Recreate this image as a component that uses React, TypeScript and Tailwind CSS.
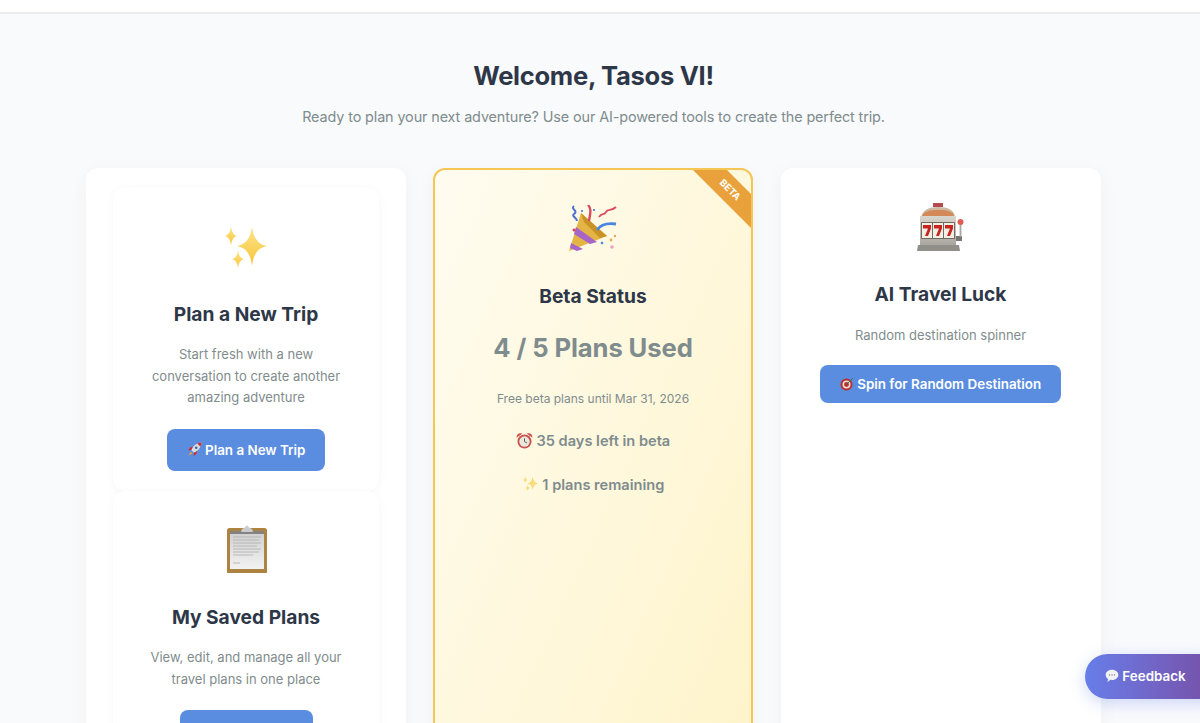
const Sparkles = () => (
  <svg width="48" height="48" viewBox="0 0 48 48">
    <defs>
      <linearGradient id="spark" x1="0" y1="0" x2="0" y2="1">
        <stop offset="0" stopColor="#fde58a" />
        <stop offset="1" stopColor="#f7c53d" />
      </linearGradient>
    </defs>
    <path d="M30 1.500 Q32 19 45 21 Q32 23 30 40.500 Q28 23 15 21 Q28 19 30 1.500Z" fill="url(#spark)" />
    <path d="M9 1.500 Q10 10 15 11 Q10 12 9 20.500 Q8 12 3 11 Q8 10 9 1.500Z" fill="url(#spark)" />
    <path d="M16 25.500 Q17 33 22 34 Q17 35 16 42.500 Q15 35 10 34 Q15 33 16 25.500Z" fill="url(#spark)" />
  </svg>
)

const Clipboard = () => (
  <svg width="48" height="48" viewBox="0 0 48 48">
    <defs>
      <linearGradient id="paper" x1="0" y1="0" x2="0" y2="1">
        <stop offset="0" stopColor="#cfcfcf" />
        <stop offset="1" stopColor="#f2f2f2" />
      </linearGradient>
    </defs>
    <rect x="5" y="3" width="40" height="46" rx="2.500" fill="#ad8342" />
    <rect x="8" y="6" width="34" height="38" fill="url(#paper)" />
    <path d="M8 6h34v3H8z" fill="#85837f" />
    <path d="M20 4 L23 2.500 C24 0 26 0 27 2.500 L30 4 L31 7 H19Z" fill="#c8ccd0" />
    <path d="M11 12h28M11 15h26M11 18h28M11 21h24M11 24h28M11 27h26M11 30h20M11 38h7" stroke="#adadad" strokeWidth="0.8" />
  </svg>
)

const Popper = () => (
  <svg width="48" height="48" viewBox="0 0 48 48">
    <path d="M0 46 L12 8 L38 31 Z" fill="#e4b545" />
    <path d="M12 8 L38 31 L31 33 L15 17Z" fill="#c89428" />
    <path d="M7 22 L28 37 L21 39 L5 29Z" fill="#a765c8" />
    <path d="M2 38 L14 44 L8 46 L1 43Z" fill="#a765c8" />
    <path d="M5 1 C1 4 10 6 5 9 C2 11 8 13 8 16" stroke="#4a6fd0" strokeWidth="2" fill="none" />
    <path d="M19 0 C23 4 21 9 20 16" stroke="#dc4a5e" strokeWidth="2.400" fill="none" />
    <path d="M30 12 C33 7 35 11 37 7 C39 3 42 7 47 2" stroke="#dc4a5e" strokeWidth="1.800" fill="none" />
    <path d="M28 25 C32 19 40 18 47 19" stroke="#4a85e0" strokeWidth="2.800" fill="none" />
    <circle cx="5" cy="25" r="1.500" fill="#d8434f" />
    <circle cx="25" cy="5" r="1.100" fill="#4a6fd0" />
    <circle cx="33" cy="38" r="1.300" fill="#4a85e0" />
    <circle cx="42" cy="35" r="1.400" fill="#e9a84c" />
    <circle cx="46" cy="31" r="1.200" fill="#e9a84c" />
    <circle cx="43" cy="42" r="1.700" fill="#eb9cc0" />
    <circle cx="13" cy="6" r="1.100" fill="#4a6fd0" />
  </svg>
)

const SlotMachine = () => (
  <svg width="48" height="48" viewBox="0 0 48 48">
    <defs>
      <linearGradient id="metal" x1="0" y1="0" x2="0" y2="1">
        <stop offset="0" stopColor="#d9d6cd" />
        <stop offset="1" stopColor="#a9a69f" />
      </linearGradient>
    </defs>
    <rect x="16" y="0" width="10" height="4" fill="#b34a50" />
    <path d="M4 15 C5 7 12 4 21 4 C31 4 38 7 38 15Z" fill="#cdb9a2" />
    <path d="M5 13 C7 8 13 7 21 7 C30 7 36 8 37 13Z" fill="#d38a58" />
    <rect x="3" y="13" width="36" height="29" fill="url(#metal)" />
    <rect x="4" y="19" width="34" height="17" rx="1" fill="#6f6b61" />
    <rect x="5" y="20" width="10" height="15" fill="#f3efe4" />
    <rect x="16" y="20" width="10" height="15" fill="#f3efe4" />
    <rect x="27" y="20" width="10" height="15" fill="#f3efe4" />
    <path d="M6 22h8v3.500l-3 7.500H8l3-7.500H6zM17 22h8v3.500l-3 7.500h-3l3-7.500h-5zM28 22h8v3.500l-3 7.500h-3l3-7.500h-5z" fill="#c7231f" />
    <path d="M1 42h41l1 6H0z" fill="#918f8a" />
    <rect x="39" y="33" width="6" height="5" fill="#77756f" />
    <path d="M43.500 21v13" stroke="#a4a4a4" strokeWidth="1.800" />
    <circle cx="43.500" cy="19" r="3" fill="#e15c52" />
  </svg>
)

const Rocket = () => (
  <svg width="15" height="15" viewBox="0 0 14 14" className="inline-block align-[-2px]">
    <path d="M13.500 0.500 C9 1 5.500 3.500 4 7.500 L6.500 10 C10.500 8.500 13 5 13.500 0.500Z" fill="#d9dde3" />
    <path d="M13.500 0.500 C12 .6 10.600 1 9.500 1.500 L12.500 4.500 C13 3.400 13.400 2 13.500 0.500Z" fill="#c8312d" />
    <circle cx="8.600" cy="5.400" r="1.200" fill="#3f5f98" />
    <path d="M4 7.500 L1 8 L3 5 L5.500 4.500Z M6.500 10 L6 13 L9 11 L9.500 8.500Z" fill="#c8312d" />
    <path d="M3.500 9 L1 13 L5 10.500Z" fill="#f0a030" />
  </svg>
)

const Target = () => (
  <svg width="14" height="14" viewBox="0 0 14 14" className="inline-block align-[-2px]">
    <circle cx="6.500" cy="7.500" r="6" fill="#b92f2d" />
    <circle cx="6.500" cy="7.500" r="4" fill="#e9dfd9" />
    <circle cx="6.500" cy="7.500" r="2.400" fill="#b92f2d" />
    <path d="M6.500 7.500 L13 1" stroke="#3f6a5a" strokeWidth="1" />
  </svg>
)

const AlarmClock = () => (
  <svg width="17" height="17" viewBox="0 0 16 16" className="inline-block align-[-3px]">
    <path d="M.6 5.500 C.2 2 3 .2 6 1.500Z M15.400 5.500 C15.800 2 13 .2 10 1.500Z" fill="#c9524e" />
    <circle cx="8" cy="9" r="6.600" fill="#c9524e" />
    <circle cx="8" cy="9" r="4.900" fill="#ece7dd" />
    <path d="M8 6v3l2.400 1.400" stroke="#555" strokeWidth="0.900" fill="none" />
  </svg>
)

const SmallSparkles = () => (
  <svg width="17" height="17" viewBox="0 0 48 48" className="inline-block align-[-3px]">
    <path d="M30 1.500 Q32 19 45 21 Q32 23 30 40.500 Q28 23 15 21 Q28 19 30 1.500Z" fill="#f9dc7c" />
    <path d="M9 1.500 Q10 10 15 11 Q10 12 9 20.500 Q8 12 3 11 Q8 10 9 1.500Z" fill="#f9dc7c" />
    <path d="M16 25.500 Q17 33 22 34 Q17 35 16 42.500 Q15 35 10 34 Q15 33 16 25.500Z" fill="#f9dc7c" />
  </svg>
)

const Bubble = () => (
  <svg width="14" height="14" viewBox="0 0 14 14" className="inline-block align-[-2px]">
    <path d="M7 .8C3.400.8.700 3 .7 5.900c0 1.700 1 3.100 2.400 4L2.400 13l3.200-2.200c.5.100 1 .1 1.400.1 3.600 0 6.300-2.200 6.300-5S10.600.8 7 .8Z" fill="#f1f2f6" />
    <circle cx="4.500" cy="5.900" r=".7" fill="#777" />
    <circle cx="7" cy="5.900" r=".7" fill="#777" />
    <circle cx="9.500" cy="5.900" r=".7" fill="#777" />
  </svg>
)

const blueButton = "bg-[#5a8ddf] text-white font-semibold text-[13.400px] rounded-lg"

export default function App() {
  return (
    <div className="relative h-[723px] overflow-hidden bg-[#f8fafc] font-['Inter',sans-serif]">
      <div className="h-[14px] bg-white border-b-2 border-[#ececec]" />

      <div className="pr-[13px]">
        <div className="pt-[44px] text-center">
          <h1 className="text-[25.600px] leading-[36px] font-bold tracking-[-0.3px] text-[#2d3748]">Welcome, Tasos VI!</h1>
          <p className="mt-[12px] text-[14.400px] leading-[22px] tracking-[-0.115px] text-[#7f8c8d]">
            Ready to plan your next adventure? Use our AI-powered tools to create the perfect trip.
          </p>
        </div>

        <div className="mt-[40px] mx-auto w-[1015px] grid grid-cols-[320px_320px_320px] gap-x-[27px]">
          <div className="bg-white rounded-xl shadow-[0_4px_20px_rgba(0,0,0,0.04)] px-[27px] pt-[19px] h-[700px]">
            <div className="rounded-xl bg-white shadow-[0_2px_10px_rgba(0,0,0,0.04)] h-[304px] pt-[38px] text-center">
              <div className="flex justify-center"><Sparkles /></div>
              <h3 className="mt-[26px] text-[19.200px] leading-[30px] font-bold text-[#2d3748]">Plan a New Trip</h3>
              <p className="mt-[15px] mx-auto w-[210px] text-[13px] leading-[21.600px] text-[#7f8c8d]">
                Start fresh with a new conversation to create another amazing adventure
              </p>
              <button className={`${blueButton} mt-[20px] w-[158px] h-[42px]`}>
                <Rocket /> Plan a New Trip
              </button>
            </div>
            <div className="rounded-xl bg-white shadow-[0_2px_10px_rgba(0,0,0,0.04)] h-[304px] pt-[34px] text-center">
              <div className="flex justify-center"><Clipboard /></div>
              <h3 className="mt-[29px] text-[19.200px] leading-[30px] font-bold text-[#2d3748]">My Saved Plans</h3>
              <p className="mt-[15px] mx-auto w-[210px] text-[13px] leading-[21.600px] text-[#7f8c8d]">
                View, edit, and manage all your travel plans in one place
              </p>
              <button className={`${blueButton} mt-[20px] w-[133px] h-[42px]`} />
            </div>
          </div>

          <div className="relative overflow-hidden h-[700px] rounded-xl border-2 border-[#f5c654] bg-gradient-to-br from-[#fffcf0] to-[#fef3c7] shadow-[0_4px_20px_rgba(0,0,0,0.04)] pt-[35px] text-center">
            <div className="absolute top-[8px] right-[-29px] w-[100px] h-[24px] rotate-45 bg-[#e9a23b] flex items-center justify-center text-white text-[9.600px] font-bold">
              BETA
            </div>
            <div className="flex justify-center"><Popper /></div>
            <h3 className="mt-[28px] text-[19.200px] leading-[30px] font-bold text-[#2d3748]">Beta Status</h3>
            <div className="mt-[19px] text-[25.600px] leading-[36px] font-bold tracking-[-0.1px] text-[#7f8c8d]">4 / 5 Plans Used</div>
            <p className="mt-[24px] text-[12px] leading-[18px] text-[#7f8c8d]">Free beta plans until Mar 31, 2026</p>
            <p className="mt-[22px] text-[14.600px] leading-[22px] font-semibold text-[#7f8c8d]"><AlarmClock /> 35 days left in beta</p>
            <p className="mt-[22px] text-[14.600px] leading-[22px] font-semibold text-[#7f8c8d]"><SmallSparkles /> 1 plans remaining</p>
          </div>

          <div className="ml-[1px] w-[320px] pr-[1px] bg-white rounded-xl shadow-[0_4px_20px_rgba(0,0,0,0.04)] h-[700px] pt-[35px] text-center">
            <div className="flex justify-center"><SlotMachine /></div>
            <h3 className="mt-[28px] text-[19.200px] leading-[30px] font-bold text-[#2d3748]">AI Travel Luck</h3>
            <p className="mt-[16px] text-[13px] leading-[20px] text-[#7f8c8d]">Random destination spinner</p>
            <button className={`${blueButton} mt-[20px] w-[241px] h-[38px]`}>
              <Target /> Spin for Random Destination
            </button>
          </div>
        </div>
      </div>

      <button className="absolute left-[1085px] top-[654px] w-[140px] h-[45px] rounded-full bg-gradient-to-r from-[#667eea] to-[#764ba2] text-white text-[13.400px] font-semibold text-left pl-[20px] shadow-[0_4px_15px_rgba(102,126,234,0.3)]">
        <Bubble /> Feedback
      </button>
    </div>
  )
}
